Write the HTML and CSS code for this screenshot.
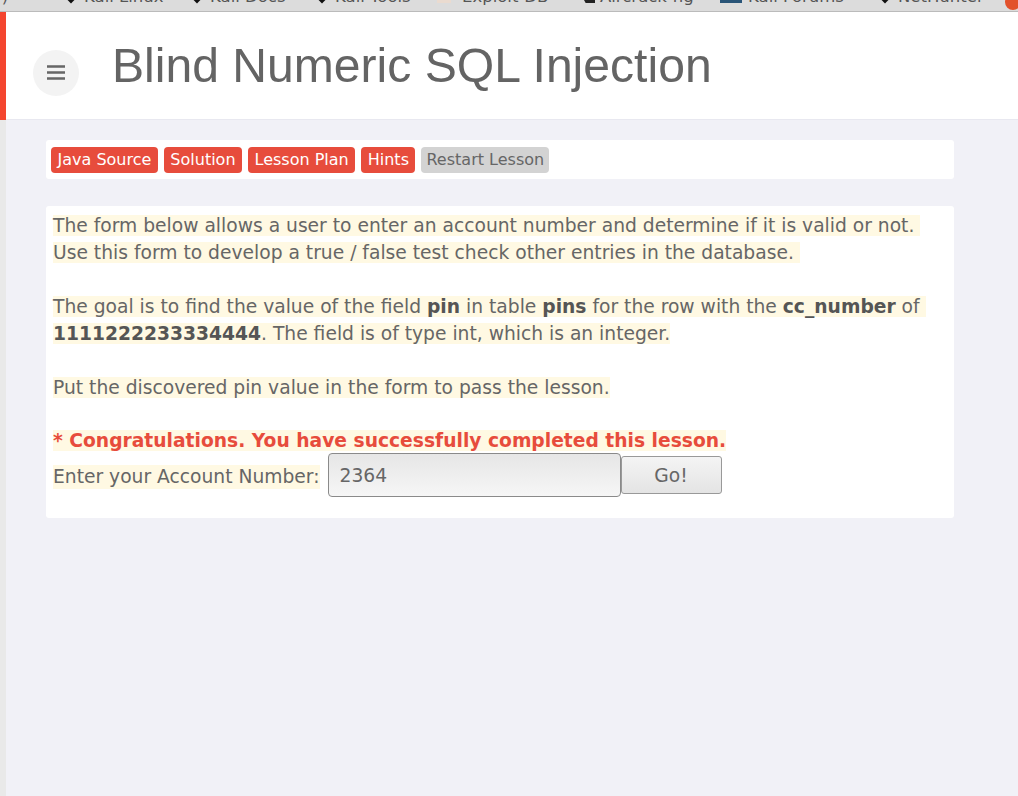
FILE: index.html
```html
<!DOCTYPE html>
<html lang="en">
<head>
  <meta charset="UTF-8" />
  <title>Blind Numeric SQL Injection</title>
  <link rel="stylesheet" href="styles.css">
</head>
<body>

  <!-- Browser bookmarks, cut off by the top of the shot -->
  <div class="bookmarks">
    <span class="mark mark-first">ority)</span>
    <span class="mark mark-linux"><i class="kali"></i>Kali Linux</span>
    <span class="mark mark-docs"><i class="kali"></i>Kali Docs</span>
    <span class="mark mark-tools"><i class="kali"></i>Kali Tools</span>
    <span class="mark mark-exploit"><i class="exploit"></i>Exploit-DB</span>
    <span class="mark mark-air"><i class="wedge"></i>Aircrack-ng</span>
    <span class="mark mark-forums"><i class="forum"></i>Kali Forums</span>
    <span class="mark mark-hunter"><i class="kali"></i>NetHunter</span>
    <i class="fox"></i>
  </div>

  <div class="page">
    <div class="side-strip"></div>

    <div class="main">
      <!-- Header -->
      <header>
        <button class="menu-btn" aria-label="Menu">
          <svg width="18" height="15" viewBox="0 0 18 15"><path d="M0 1.5h18M0 7.5h18M0 13.5h18" stroke="#666" stroke-width="2.6"/></svg>
        </button>
        <h1>Blind Numeric SQL Injection</h1>
      </header>

      <div class="content">
        <!-- Lesson buttons -->
        <div class="lesson-bar">
          <a class="btn">Java Source</a>
          <a class="btn">Solution</a>
          <a class="btn">Lesson Plan</a>
          <a class="btn">Hints</a>
          <a class="btn btn-grey">Restart Lesson</a>
        </div>

        <!-- Lesson text -->
        <div class="lesson">
          <p><span class="hl">The form below allows a user to enter an account number and determine if it is valid or not.&nbsp;<br>Use this form to develop a true / false test check other entries in the database.&nbsp;</span></p>
          <p><span class="hl">The goal is to find the value of the field <b>pin</b> in table <b>pins</b> for the row with the <b>cc_number</b> of&nbsp;<br><b>1111222233334444</b>. The field is of type int, which is an integer.</span></p>
          <p><span class="hl">Put the discovered pin value in the form to pass the lesson.</span></p>
          <div class="success"><span class="hl">* Congratulations. You have successfully completed this lesson.</span></div>
          <form class="account-form">
            <label for="account" class="hl">Enter your Account Number:</label>
            <input type="text" id="account" value="2364" />
            <button type="button">Go!</button>
          </form>
        </div>
      </div>
    </div>
  </div>

</body>
</html>
```

FILE: styles.css
```css
* {
  margin: 0;
  padding: 0;
  box-sizing: border-box;
}

html,
body {
  height: 100%;
  overflow: hidden;
}

body {
  display: flex;
  flex-direction: column;
  background: #f1f1f7;
  color: #666;
  font-family: "DejaVu Sans", sans-serif;
  font-size: 18.7px;
}

/* bookmarks bar */
.bookmarks {
  position: relative;
  flex: none;
  height: 12px;
  overflow: hidden;
  background: #dcdcdc;
  border-bottom: 1px solid #bbb;
  color: #555;
  font-size: 16.5px;
  line-height: 16px;
}

.mark {
  position: absolute;
  top: -11px;
  white-space: nowrap;
}

.mark-first { left: -36px; }
.mark-linux { left: 64px; }
.mark-docs { left: 190px; }
.mark-tools { left: 315px; }
.mark-exploit { left: 437px; }
.mark-air { left: 578px; }
.mark-forums { left: 720px; }
.mark-hunter { left: 878px; }

.kali,
.exploit,
.wedge,
.forum {
  display: inline-block;
  height: 14px;
  vertical-align: top;
}

.kali {
  width: 14px;
  margin-right: 6px;
  background: #111;
  transform: scale(0.75) rotate(45deg);
}

.exploit {
  width: 14px;
  margin-right: 11px;
  background: #eadbd0;
}

.wedge {
  width: 17px;
  margin-right: 5px;
  background: #222;
  clip-path: polygon(0 0, 100% 0, 100% 100%, 45% 100%);
}

.forum {
  width: 22px;
  margin-right: 6px;
  background: #2a5578;
}

.fox {
  position: absolute;
  left: 1005px;
  top: -6px;
  width: 16px;
  height: 16px;
  border-radius: 50%;
  background: #e2522c;
}

/* page */
.page {
  flex: 1;
  display: flex;
  min-height: 0;
}

.side-strip {
  flex: none;
  width: 6px;
  background: #e9e9e9;
}

.main {
  flex: 1;
  min-width: 0;
}

header {
  display: flex;
  align-items: center;
  height: 108px;
  background: #fff;
  border-bottom: 1px solid #e8e8f0;
  box-shadow: -6px 0 0 #f4452f;
}

.menu-btn {
  display: flex;
  align-items: center;
  justify-content: center;
  width: 46px;
  height: 46px;
  margin: 14px 33px 0 27px;
  border: none;
  border-radius: 50%;
  background: #f3f3f3;
}

header h1 {
  margin-bottom: 2px;
  font-family: "Liberation Sans", sans-serif;
  font-size: 48.1px;
  font-weight: 400;
  color: #646464;
}

.content {
  width: 908px;
  margin-left: 40px;
}

.lesson-bar {
  display: flex;
  gap: 6px;
  height: 39px;
  margin-top: 20px;
  padding: 7px 5px 0;
  background: #fff;
  border-radius: 3px;
}

.btn {
  height: 26px;
  padding: 0 6.5px;
  border-radius: 4px;
  background: #e74c3c;
  color: #fff;
  font-size: 16px;
  line-height: 26px;
}

.btn-grey {
  padding: 0 5px;
  background: #d3d3d3;
  color: #666;
}

.lesson {
  height: 312px;
  margin-top: 27px;
  padding: 6px 7px;
  background: #fff;
  border-radius: 3px;
  line-height: 27px;
}

.lesson p {
  margin-bottom: 27px;
}

.hl {
  background: #fff9e3;
}

.lesson b {
  color: #555;
}

.success {
  margin-top: -1px;
  color: #e74c3c;
  font-weight: 700;
}

.account-form {
  display: flex;
  align-items: center;
  margin-top: -1px;
}

.account-form label {
  margin: 4px 8px 0 0;
  line-height: 24px;
}

.account-form input {
  width: 293px;
  height: 44px;
  padding: 0 11px;
  border: 1px solid #8a8a8a;
  border-radius: 4px;
  background: linear-gradient(#e6e6e6, #f6f6f6);
  color: #666;
  font: inherit;
}

.account-form button {
  width: 101px;
  height: 38px;
  border: 1px solid #999;
  border-radius: 3px;
  background: linear-gradient(#f4f4f4, #e4e4e4);
  color: #666;
  font: inherit;
}
```
